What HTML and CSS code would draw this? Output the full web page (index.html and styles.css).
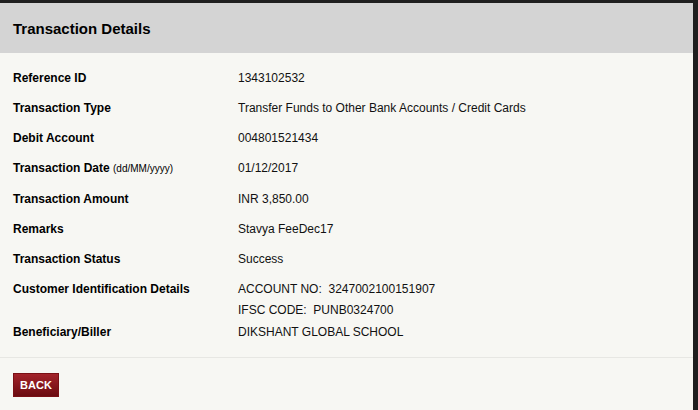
FILE: index.html
```html
<!DOCTYPE html>
<html>
<head>
<meta charset="utf-8">
<link rel="stylesheet" href="styles.css">
</head>
<body>
<div class="panel">
  <div class="panel-head">Transaction Details</div>
  <div class="details">
    <div class="row"><div class="label">Reference ID</div><div class="value">1343102532</div></div>
    <div class="row"><div class="label">Transaction Type</div><div class="value">Transfer Funds to Other Bank Accounts / Credit Cards</div></div>
    <div class="row"><div class="label">Debit Account</div><div class="value">004801521434</div></div>
    <div class="row"><div class="label">Transaction Date <span class="hint">(dd/MM/yyyy)</span></div><div class="value">01/12/2017</div></div>
    <div class="row"><div class="label">Transaction Amount</div><div class="value">INR 3,850.00</div></div>
    <div class="row"><div class="label">Remarks</div><div class="value">Stavya FeeDec17</div></div>
    <div class="row"><div class="label">Transaction Status</div><div class="value">Success</div></div>
    <div class="row row-multi"><div class="label">Customer Identification Details</div><div class="value"><div>ACCOUNT NO:&nbsp; 3247002100151907</div><div class="second">IFSC CODE:&nbsp; PUNB0324700</div></div></div>
    <div class="row row-after"><div class="label">Beneficiary/Biller</div><div class="value">DIKSHANT GLOBAL SCHOOL</div></div>
  </div>
  <div class="actions"><button class="btn-back">BACK</button></div>
</div>
</body>
</html>
```
FILE: styles.css
```css
html, body {
  margin: 0;
  padding: 0;
  height: 100%;
}
body {
  background: #1f1f1f;
  font-family: "Liberation Sans", Arial, sans-serif;
  overflow: hidden;
}
.panel {
  margin-top: 3px;
  width: 693px;
  height: 407px;
  background: #f7f7f3;
}
.panel-head {
  height: 50px;
  background: #d4d4d4;
  box-sizing: border-box;
  padding: 17px 13px 0;
  font-size: 15px;
  font-weight: bold;
  line-height: 17px;
  color: #000;
}
.details {
  padding: 10px 0 10px;
  border-bottom: 1px solid #e7e7e3;
}
.row {
  display: grid;
  grid-template-columns: 225px 1fr;
  padding: 8px 13px;
  font-size: 12px;
  line-height: 14px;
  color: #111;
}
.label {
  font-weight: bold;
  color: #000;
}
.hint {
  font-weight: normal;
  font-size: 10px;
}
.row-multi {
  padding-bottom: 0;
}
.value .second {
  margin-top: 7px;
}
.row-after {
  padding-top: 8px;
}
.actions {
  padding: 15px 13px;
}
.btn-back {
  width: 46px;
  height: 24px;
  padding: 0;
  border: 1px solid #7a1015;
  background: linear-gradient(#a3232a, #6b0c11);
  color: #fff;
  font-family: "Liberation Sans", Arial, sans-serif;
  font-weight: bold;
  font-size: 11px;
  cursor: pointer;
}
```
